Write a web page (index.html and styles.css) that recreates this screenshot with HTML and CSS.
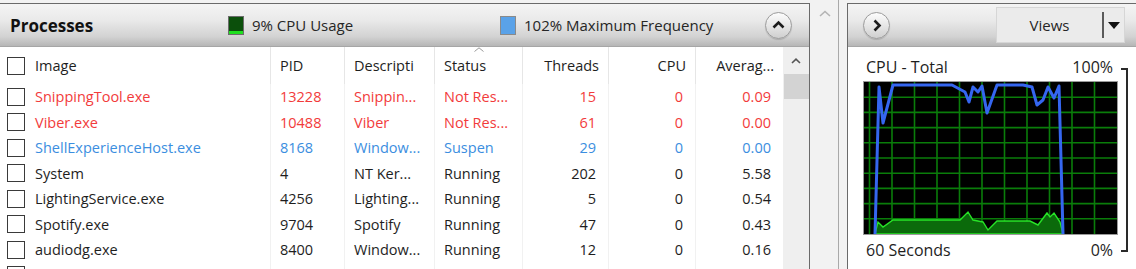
FILE: index.html
```html
<!DOCTYPE html>
<html lang="en">
  <head>
    <meta charset="UTF-8" />
    <title>Processes</title>
    <link rel="stylesheet" href="styles.css">
  </head>
  <body>
    <!-- Left panel: process list -->
    <div class="panel panel-left">
      <div class="panel-head">
        <div class="title">Processes</div>
        <div class="stat stat-cpu">
          <svg class="stat-icon" width="16" height="19" viewBox="0 0 16 19">
            <rect x="0.5" y="0.5" width="15" height="18" fill="#0b4f0b" stroke="#6b6b6b" />
            <rect x="1" y="15" width="14" height="3" fill="#1fe01f" />
          </svg>
          9% CPU Usage
        </div>
        <div class="stat stat-freq">
          <svg class="stat-icon" width="16" height="19" viewBox="0 0 16 19">
            <rect x="0.5" y="0.5" width="15" height="18" fill="#5aa2e8" stroke="#8a8a8a" />
          </svg>
          102% Maximum Frequency
        </div>
        <div class="round-btn collapse-btn">
          <svg width="27" height="27" viewBox="0 0 27 27">
            <path d="M8.5 15.5 L13.5 10.5 L18.5 15.5" fill="none" stroke="#1c1c1c" stroke-width="2.6" />
          </svg>
        </div>
      </div>

      <div class="table-wrap">
        <div class="table">
          <div class="row row-head">
            <div class="cell c-image"><span class="check"></span>Image</div>
            <div class="cell">PID</div>
            <div class="cell">Descripti</div>
            <div class="cell c-status">
              <svg class="sort-arrow" width="10" height="5" viewBox="0 0 10 5">
                <path d="M0.5 4.5 L5 0.8 L9.5 4.5" fill="none" stroke="#9a9a9a" stroke-width="1" />
              </svg>
              Status
            </div>
            <div class="cell num">Threads</div>
            <div class="cell num">CPU</div>
            <div class="cell num">Averag...</div>
          </div>

          <div class="row red">
            <div class="cell c-image"><span class="check"></span>SnippingTool.exe</div>
            <div class="cell">13228</div>
            <div class="cell">Snippin...</div>
            <div class="cell">Not Res...</div>
            <div class="cell num">15</div>
            <div class="cell num">0</div>
            <div class="cell num">0.09</div>
          </div>
          <div class="row red">
            <div class="cell c-image"><span class="check"></span>Viber.exe</div>
            <div class="cell">10488</div>
            <div class="cell">Viber</div>
            <div class="cell">Not Res...</div>
            <div class="cell num">61</div>
            <div class="cell num">0</div>
            <div class="cell num">0.00</div>
          </div>
          <div class="row blue">
            <div class="cell c-image"><span class="check"></span>ShellExperienceHost.exe</div>
            <div class="cell">8168</div>
            <div class="cell">Window...</div>
            <div class="cell">Suspen</div>
            <div class="cell num">29</div>
            <div class="cell num">0</div>
            <div class="cell num">0.00</div>
          </div>
          <div class="row">
            <div class="cell c-image"><span class="check"></span>System</div>
            <div class="cell">4</div>
            <div class="cell">NT Ker...</div>
            <div class="cell">Running</div>
            <div class="cell num">202</div>
            <div class="cell num">0</div>
            <div class="cell num">5.58</div>
          </div>
          <div class="row">
            <div class="cell c-image"><span class="check"></span>LightingService.exe</div>
            <div class="cell">4256</div>
            <div class="cell">Lighting...</div>
            <div class="cell">Running</div>
            <div class="cell num">5</div>
            <div class="cell num">0</div>
            <div class="cell num">0.54</div>
          </div>
          <div class="row">
            <div class="cell c-image"><span class="check"></span>Spotify.exe</div>
            <div class="cell">9704</div>
            <div class="cell">Spotify</div>
            <div class="cell">Running</div>
            <div class="cell num">47</div>
            <div class="cell num">0</div>
            <div class="cell num">0.43</div>
          </div>
          <div class="row">
            <div class="cell c-image"><span class="check"></span>audiodg.exe</div>
            <div class="cell">8400</div>
            <div class="cell">Window...</div>
            <div class="cell">Running</div>
            <div class="cell num">12</div>
            <div class="cell num">0</div>
            <div class="cell num">0.16</div>
          </div>
          <div class="row">
            <div class="cell c-image"><span class="check"></span></div>
            <div class="cell"></div>
            <div class="cell"></div>
            <div class="cell"></div>
            <div class="cell num"></div>
            <div class="cell num"></div>
            <div class="cell num"></div>
          </div>
        </div>

        <!-- Scroll bar of the list -->
        <div class="scrollbar">
          <div class="sb-arrow">
            <svg width="10" height="6" viewBox="0 0 10 6">
              <path d="M1 5 L5 1.2 L9 5" fill="none" stroke="#555" stroke-width="1.6" />
            </svg>
          </div>
          <div class="sb-thumb"></div>
        </div>
      </div>
    </div>

    <!-- Splitter between the panels -->
    <div class="gap">
      <div class="gap-scroll">
        <svg width="12" height="7" viewBox="0 0 12 7">
          <path d="M1 6 L6 1.5 L11 6" fill="none" stroke="#b4b4b4" stroke-width="1.6" />
        </svg>
      </div>
    </div>

    <!-- Right panel: CPU graph -->
    <div class="panel panel-right">
      <div class="panel-head">
        <div class="round-btn expand-btn">
          <svg width="27" height="27" viewBox="0 0 27 27">
            <path d="M11.5 8.5 L16.5 13.5 L11.5 18.5" fill="none" stroke="#1c1c1c" stroke-width="2.6" />
          </svg>
        </div>
        <div class="views-btn">
          <span class="views-label">Views</span>
          <span class="views-divider"></span>
          <span class="views-arrow"></span>
        </div>
      </div>

      <div class="graph-body">
        <div class="graph-col">
          <div class="graph-label">
            <span>CPU - Total</span>
            <span>100%</span>
          </div>
          <div class="graph">
            <svg width="253" height="152" viewBox="0 0 253 152">
              <rect width="253" height="152" fill="#000" />
              <g stroke="#0a7d0a" stroke-width="1.6">
                <line x1="0" y1="15.2" x2="253" y2="15.2" />
                <line x1="0" y1="30.4" x2="253" y2="30.4" />
                <line x1="0" y1="45.6" x2="253" y2="45.6" />
                <line x1="0" y1="60.8" x2="253" y2="60.8" />
                <line x1="0" y1="76" x2="253" y2="76" />
                <line x1="0" y1="91.2" x2="253" y2="91.2" />
                <line x1="0" y1="106.4" x2="253" y2="106.4" />
                <line x1="0" y1="121.6" x2="253" y2="121.6" />
                <line x1="0" y1="136.8" x2="253" y2="136.8" />
                <line x1="5.5" y1="0" x2="5.5" y2="152" />
                <line x1="28" y1="0" x2="28" y2="152" />
                <line x1="50.5" y1="0" x2="50.5" y2="152" />
                <line x1="73" y1="0" x2="73" y2="152" />
                <line x1="95.5" y1="0" x2="95.5" y2="152" />
                <line x1="118" y1="0" x2="118" y2="152" />
                <line x1="140.5" y1="0" x2="140.5" y2="152" />
                <line x1="163" y1="0" x2="163" y2="152" />
                <line x1="185.5" y1="0" x2="185.5" y2="152" />
                <line x1="208" y1="0" x2="208" y2="152" />
                <line x1="230.5" y1="0" x2="230.5" y2="152" />
              </g>
              <polygon fill="#0b6a0b" stroke="#27e327" stroke-width="1.4"
                points="11,152 14,140 19,145 29,138 96,138 104,130 109,138 119,140 124,148 133,139 166,139 174,143 183,131 186,135 190,131 196,140 199,152" />
              <polyline fill="none" stroke="#3566f0" stroke-width="3" stroke-linejoin="round"
                points="11,152 15,5 19,41 29,3 88,3 101,10 105,20 109,5 114,10 118,4 123,31 133,3 159,3 168,5 173,23 179,18 184,5 190,16 195,4 199,152" />
            </svg>
          </div>
          <div class="graph-label graph-foot">
            <span>60 Seconds</span>
            <span>0%</span>
          </div>
        </div>
        <div class="bracket"></div>
      </div>
    </div>
  </body>
</html>
```

FILE: styles.css
```css
* {
  box-sizing: border-box;
}

body {
  margin: 0;
  width: 1136px;
  height: 269px;
  overflow: hidden;
  display: flex;
  background-color: #f2f2f2;
  font-family: 'Open Sans', sans-serif;
  color: #1e1e1e;
}

/* Panels */
.panel {
  margin-top: 3px;
  height: 266px;
  background-color: #ffffff;
  border-top: 1px solid #6a6a6a;
  display: flex;
  flex-direction: column;
}

.panel-left {
  width: 810px;
  border-right: 1px solid #6a6a6a;
}

.panel-right {
  width: 289px;
  border-left: 1px solid #6a6a6a;
}

.panel-head {
  flex: none;
  height: 43px;
  display: flex;
  align-items: center;
  background: linear-gradient(#f4f4f4 0%, #e9e9e9 40%, #d2d2d2 78%, #b6b6b6 100%);
  border-bottom: 1px solid #a6a6a6;
}

.title {
  width: 228px;
  padding-left: 10px;
  font-size: 17px;
  font-weight: 700;
  color: #111;
}

.stat {
  display: flex;
  align-items: center;
  font-size: 15px;
  color: #262626;
}

.stat-cpu {
  width: 272px;
}

.stat-icon {
  margin-right: 8px;
  flex: none;
}

/* Round buttons in the headers */
.round-btn {
  width: 27px;
  height: 27px;
  border-radius: 50%;
  border: 1px solid #9c9c9c;
  background: linear-gradient(#fdfdfd, #e2e2e2 60%, #cfcfcf);
  box-shadow: 0 1px 1px rgba(0, 0, 0, 0.15);
  flex: none;
}

.round-btn svg {
  display: block;
  margin: -1px;
}

.collapse-btn {
  margin-left: auto;
  margin-right: 17px;
}

.expand-btn {
  margin-left: 15px;
}

.views-btn {
  margin-left: auto;
  margin-right: 11px;
  width: 129px;
  height: 36px;
  display: flex;
  align-items: center;
  background-color: #ebebeb;
  border: 1px solid #d6d6d6;
}

.views-label {
  flex: 1;
  text-align: center;
  font-size: 15px;
  color: #262626;
}

.views-divider {
  width: 2px;
  height: 26px;
  background-color: #5a5a5a;
}

.views-arrow {
  width: 20px;
  display: flex;
  justify-content: center;
}

.views-arrow::before {
  content: '';
  border-left: 6px solid transparent;
  border-right: 6px solid transparent;
  border-top: 7px solid #111;
}

/* Process table */
.table-wrap {
  flex: 1;
  display: flex;
  overflow: hidden;
}

.table {
  width: 783px;
}

.row {
  display: grid;
  grid-template-columns: 270px 74px 90px 88px 86px 87px 88px;
  height: 25.5px;
  font-size: 14.5px;
}

.row-head {
  height: 37px;
}

.cell {
  display: flex;
  align-items: center;
  padding-left: 9px;
  white-space: nowrap;
  overflow: hidden;
  border-left: 1px solid #f1f1f1;
}

.row-head .cell {
  border-left-color: #e6e6e6;
}

.row .cell:first-child {
  border-left: none;
}

.c-image {
  padding-left: 7px;
}

.cell.num {
  justify-content: flex-end;
  padding-right: 12px;
}

.row-head .cell.num {
  padding-right: 9px;
}

.c-status {
  position: relative;
}

.sort-arrow {
  position: absolute;
  left: 39px;
  top: 0;
}

.check {
  width: 18px;
  height: 18px;
  border: 1px solid #3a3a3a;
  background-color: #fff;
  margin-right: 10px;
  flex: none;
}

.red {
  color: #f23b3b;
}

.blue {
  color: #3b8ee0;
}

.scrollbar {
  width: 26px;
  background-color: #efefef;
}

.sb-arrow {
  height: 27px;
  display: flex;
  justify-content: center;
  align-items: center;
}

.sb-thumb {
  height: 25px;
  margin-left: 1px;
  background-color: #d3d3d3;
}

/* Splitter */
.gap {
  width: 37px;
  height: 269px;
  display: flex;
}

.gap-scroll {
  width: 29px;
  border-right: 1px solid #a9a9a9;
  display: flex;
  justify-content: center;
  padding-top: 10px;
  padding-left: 1px;
}

/* CPU graph */
.graph-body {
  display: flex;
  padding-left: 15px;
}

.graph-col {
  width: 255px;
  padding-top: 9px;
}

.graph-label {
  display: flex;
  justify-content: space-between;
  padding: 0 5px 0 3px;
  font-size: 16px;
  line-height: 22px;
  color: #1e1e1e;
}

.graph {
  margin-top: 3px;
  width: 255px;
  height: 154px;
  border: 1px solid #9a9a9a;
}

.graph svg {
  display: block;
}

.graph-foot {
  margin-top: 4px;
}

.bracket {
  margin-top: 21px;
  margin-left: 3px;
  width: 7px;
  height: 184px;
  border: 2px solid #2a2a2a;
  border-left: none;
}
```
